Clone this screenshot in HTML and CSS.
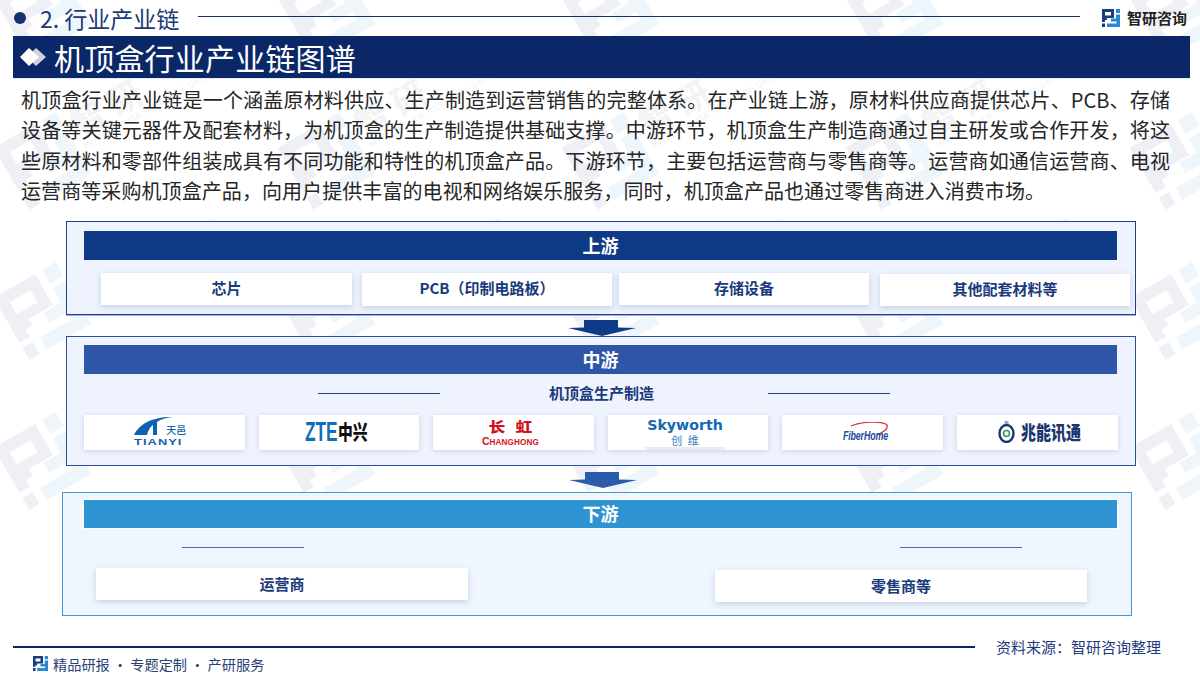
FILE: index.html
```html
<!DOCTYPE html>
<html lang="zh-CN">
<head>
<meta charset="utf-8">
<title>机顶盒行业产业链图谱</title>
<link rel="stylesheet" href="styles.css">
</head>
<body>
<svg class="defs" width="0" height="0" aria-hidden="true">
  <symbol id="mark" viewBox="0 0 18 18">
    <path fill="#1c3c80" d="M0 0H12V9H5V11H3V6.500H9V3H3V13H0ZM0 14.500H3V18H0Z"/>
    <path fill="#2a8ad0" d="M14 0H18V4H14ZM14 5.500H18V18H5V14.500H14.500V12.500H9V9.500H14Z"/>
  </symbol>
</svg>

<div class="watermarks" aria-hidden="true">
  <div class="wm"><svg class="wm-mark"><use href="#mark"/></svg><div class="wm-text"><b>智研</b><i>INTELLIGENCE RESEARCH GROUP</i></div></div>
  <div class="wm"><svg class="wm-mark"><use href="#mark"/></svg><div class="wm-text"><b>智研</b><i>INTELLIGENCE RESEARCH GROUP</i></div></div>
  <div class="wm"><svg class="wm-mark"><use href="#mark"/></svg><div class="wm-text"><b>智研</b><i>INTELLIGENCE RESEARCH GROUP</i></div></div>
  <div class="wm"><svg class="wm-mark"><use href="#mark"/></svg><div class="wm-text"><b>智研</b><i>INTELLIGENCE RESEARCH GROUP</i></div></div>
  <div class="wm"><svg class="wm-mark"><use href="#mark"/></svg><div class="wm-text"><b>智研</b><i>INTELLIGENCE RESEARCH GROUP</i></div></div>
  <div class="wm"><svg class="wm-mark"><use href="#mark"/></svg><div class="wm-text"><b>智研</b><i>INTELLIGENCE RESEARCH GROUP</i></div></div>
  <div class="wm"><svg class="wm-mark"><use href="#mark"/></svg><div class="wm-text"><b>智研</b><i>INTELLIGENCE RESEARCH GROUP</i></div></div>
  <div class="wm"><svg class="wm-mark"><use href="#mark"/></svg><div class="wm-text"><b>智研</b><i>INTELLIGENCE RESEARCH GROUP</i></div></div>
  <div class="wm"><svg class="wm-mark"><use href="#mark"/></svg><div class="wm-text"><b>智研</b><i>INTELLIGENCE RESEARCH GROUP</i></div></div>
  <div class="wm"><svg class="wm-mark"><use href="#mark"/></svg><div class="wm-text"><b>智研</b><i>INTELLIGENCE RESEARCH GROUP</i></div></div>
  <div class="wm"><svg class="wm-mark"><use href="#mark"/></svg><div class="wm-text"><b>智研</b><i>INTELLIGENCE RESEARCH GROUP</i></div></div>
  <div class="wm"><svg class="wm-mark"><use href="#mark"/></svg><div class="wm-text"><b>智研</b><i>INTELLIGENCE RESEARCH GROUP</i></div></div>
  <div class="wm"><svg class="wm-mark"><use href="#mark"/></svg><div class="wm-text"><b>智研</b><i>INTELLIGENCE RESEARCH GROUP</i></div></div>
  <div class="wm"><svg class="wm-mark"><use href="#mark"/></svg><div class="wm-text"><b>智研</b><i>INTELLIGENCE RESEARCH GROUP</i></div></div>
  <div class="wm"><svg class="wm-mark"><use href="#mark"/></svg><div class="wm-text"><b>智研</b><i>INTELLIGENCE RESEARCH GROUP</i></div></div>
  <div class="wm"><svg class="wm-mark"><use href="#mark"/></svg><div class="wm-text"><b>智研</b><i>INTELLIGENCE RESEARCH GROUP</i></div></div>
  <div class="wm"><svg class="wm-mark"><use href="#mark"/></svg><div class="wm-text"><b>智研</b><i>INTELLIGENCE RESEARCH GROUP</i></div></div>
  <div class="wm"><svg class="wm-mark"><use href="#mark"/></svg><div class="wm-text"><b>智研</b><i>INTELLIGENCE RESEARCH GROUP</i></div></div>
  <div class="wm"><svg class="wm-mark"><use href="#mark"/></svg><div class="wm-text"><b>智研</b><i>INTELLIGENCE RESEARCH GROUP</i></div></div>
  <div class="wm"><svg class="wm-mark"><use href="#mark"/></svg><div class="wm-text"><b>智研</b><i>INTELLIGENCE RESEARCH GROUP</i></div></div>
</div>

<main class="page">
  <header class="top">
    <span class="top-dot"></span>
    <span class="top-title">2. 行业产业链</span>
    <span class="top-line"></span>
    <svg class="brand-mark"><use href="#mark"/></svg>
    <span class="brand-name">智研咨询</span>
  </header>

  <h1 class="title">
    <svg class="title-icon" viewBox="0 0 28 20"><path fill="#cfd2d8" d="M17 1l10 9-10 9-9-9z"/><path fill="#fff" d="M10 1l10 9-10 9-9-9z"/></svg>
    <span>机顶盒行业产业链图谱</span>
  </h1>

  <div class="intro">
    <p class="jl">机顶盒行业产业链是一个涵盖原材料供应、生产制造到运营销售的完整体系。在产业链上游，原材料供应商提供芯片、PCB、存储</p>
    <p class="jl">设备等关键元器件及配套材料，为机顶盒的生产制造提供基础支撑。中游环节，机顶盒生产制造商通过自主研发或合作开发，将这</p>
    <p class="jl">些原材料和零部件组装成具有不同功能和特性的机顶盒产品。下游环节，主要包括运营商与零售商等。运营商如通信运营商、电视</p>
    <p class="last">运营商等采购机顶盒产品，向用户提供丰富的电视和网络娱乐服务，同时，机顶盒产品也通过零售商进入消费市场。</p>
  </div>

  <section class="panel panel-up">
    <div class="bar bar-up">上游</div>
    <div class="up-row">
      <div class="card up-1">芯片</div>
      <div class="card up-2">PCB（印制电路板）</div>
      <div class="card up-3">存储设备</div>
      <div class="card up-4">其他配套材料等</div>
    </div>
  </section>

  <svg class="arrow arrow-1" viewBox="0 0 68 16"><path fill="#0f3a85" d="M16 0H50V7.500L68 8 34 16 0 8 16 7.500Z"/></svg>

  <section class="panel panel-mid">
    <div class="bar bar-mid">中游</div>
    <div class="sub-row">
      <span class="rule"></span>
      <span class="sub-label">机顶盒生产制造</span>
      <span class="rule"></span>
    </div>
    <div class="logo-row">
      <div class="logo-card">
        <div class="lg-tianyi">
          <svg class="ty-arc" viewBox="0 0 38 18"><path fill="#0f62b0" d="M0 18C5 8 16 0 38 0 30 1 26 3 23 5V18H19V8C16 10 14 14 13 18Z"/></svg>
          <span class="ty-cn">天邑</span>
          <span class="ty-en">TIANYI</span>
        </div>
      </div>
      <div class="logo-card logo-zte">
        <span class="zte">ZTE</span><span class="zte-cn">中兴</span>
      </div>
      <div class="logo-card logo-col logo-ch">
        <span class="ch-cn"><span class="ch-g">长</span><span class="ch-g">虹</span></span>
        <span class="ch-en">CHANGHONG</span>
      </div>
      <div class="logo-card logo-col logo-sky">
        <span class="sky-en">Skyworth</span>
        <span class="sky-cn">创 维</span>
        <span class="sky-shade"></span>
      </div>
      <div class="logo-card">
        <div class="fh">
          <svg class="fh-arc" viewBox="0 0 46 14"><path fill="none" stroke="#d8333a" stroke-width="1.300" d="M8 4C20-1 40-1 44 3 45 6 41 10 34 13"/></svg>
          <span class="fh-text">FiberHome</span>
        </div>
      </div>
      <div class="logo-card logo-zn">
        <svg class="zn-icon" viewBox="0 0 16 22"><ellipse cx="8" cy="12.500" rx="7" ry="8.500" fill="none" stroke="#1a3770" stroke-width="2.400"/><circle cx="8" cy="12.500" r="3" fill="none" stroke="#2a9a5c" stroke-width="1.600"/><path fill="#9aa6bc" d="M6 0h4v3H6z"/></svg>
        <span class="zn-text">兆能讯通</span>
      </div>
    </div>
  </section>

  <svg class="arrow arrow-2" viewBox="0 0 68 16"><path fill="#2a5cab" d="M16 0H50V7.500L68 8 34 16 0 8 16 7.500Z"/></svg>

  <section class="panel panel-down">
    <div class="bar bar-down">下游</div>
    <div class="down-rules">
      <span class="rule rule-soft"></span>
      <span class="rule rule-soft"></span>
    </div>
    <div class="down-row">
      <div class="card down-1">运营商</div>
      <div class="card down-2">零售商等</div>
    </div>
  </section>

  <footer class="foot">
    <div class="foot-top">
      <span class="foot-line"></span>
      <span class="foot-source">资料来源：智研咨询整理</span>
    </div>
    <div class="foot-bottom">
      <svg class="foot-mark"><use href="#mark"/></svg>
      <span class="foot-slogan">精品研报 · 专题定制 · 产研服务</span>
    </div>
  </footer>
</main>
</body>
</html>
```

FILE: styles.css
```css
* { box-sizing: border-box; }
html, body { margin: 0; padding: 0; }
body {
  width: 1200px;
  height: 674px;
  overflow: hidden;
  background: #fff;
  position: relative;
  font-family: "Noto Sans CJK SC", "Noto Sans", sans-serif;
}
.defs { position: absolute; }

/* watermark layer */
.watermarks {
  position: absolute;
  left: 0;
  top: 0;
  width: 1200px;
  height: 674px;
  overflow: hidden;
  display: grid;
  grid-template-columns: repeat(5, 284px);
  grid-auto-rows: 150px;
  padding: 0 0 0 2px;
  margin: 0;
  align-content: start;
}
.wm { display: flex; align-items: flex-start; gap: 8px; transform: translateY(-38px) rotate(-30deg); transform-origin: 40px 40px; padding-top: 12px; width: 284px; }
.wm-mark { width: 72px; height: 72px; opacity: .07; flex: none; }
.wm-text { display: flex; flex-direction: column; color: #f2f3f5; margin-top: 2px; }
.wm-text b { font-size: 34px; line-height: 38px; font-weight: 700; letter-spacing: 8px; white-space: nowrap; }
.wm-text i { font: normal 8px/10px "Liberation Sans", sans-serif; white-space: nowrap; letter-spacing: .6px; color: #eef0f3; }

.page { position: relative; display: flex; flex-direction: column; height: 674px; }
.page > * { flex: none; }

/* header */
.top { display: flex; align-items: center; height: 36px; padding-left: 14px; }
.top-dot { width: 12px; height: 12px; border-radius: 50%; background: #14306f; flex: none; }
.top-title { margin-left: 14px; font-size: 23px; line-height: 36px; color: #1d3a78; width: 158px; flex: none; white-space: nowrap; }
.top-line { width: 882px; height: 1.500px; background: #14306f; margin-top: -3px; flex: none; }
.brand-mark { width: 18px; height: 18px; margin-left: 22px; flex: none; }
.brand-name { margin-left: 7px; font-size: 15px; font-weight: 700; color: #222; white-space: nowrap; line-height: 18px; }

.title {
  margin: 0 0 0 13px;
  width: 1177px;
  height: 42px;
  background: #0a2768;
  color: #fff;
  font-size: 30px;
  letter-spacing: .2px;
  font-weight: 400;
  line-height: 42px;
  display: flex;
  align-items: center;
  padding-left: 6px;
  box-shadow: 0 1px 0 #e6ebf4;
}
.title-icon { width: 28px; height: 20px; margin-right: 7px; flex: none; }

/* intro paragraph */
.intro { margin: 7px 0 0 21px; width: 1149px; font-size: 20px; color: #262626; }
.intro p { margin: 0; height: 30.400px; line-height: 30.400px; white-space: nowrap; }
.intro .jl { white-space: normal; text-align: justify; text-align-last: justify; }
.intro .last { letter-spacing: .08px; }

/* panels */
.panel { border: 1px solid #2a4f9e; background: #eef3fd; margin-left: 66px; width: 1070px; }
.panel-up { margin-top: 14.400px; height: 94px; padding: 9px 18px 0 17px; border-color: #1f418f; box-shadow: 0 1px 0 #9db0d8; }
.panel-mid { height: 130px; padding: 8px 18px 0 17px; }
.panel-down { margin-left: 62px; width: 1070px; height: 124px; padding: 7px 14px 0 21px; border-color: #3d98d6; background: #eff6fe; }

.bar { height: 29px; color: #fff; font-size: 18px; font-weight: 700; line-height: 29px; text-align: center; }
.bar-up { background: #0f3a85; }
.bar-mid { background: #2d57a6; }
.bar-down { height: 28px; line-height: 27px; background: #3093d1; box-shadow: 0 0 0 1px #fff; }

.card {
  background: #fff;
  color: #1a3a7c;
  font-size: 15px;
  font-weight: 700;
  text-align: center;
  flex: none;
  box-shadow: 0 2px 6px rgba(70, 100, 170, .25);
}

.up-row { display: flex; align-items: flex-start; margin-top: 13px; }
.up-row .card { height: 32px; line-height: 30px; }
.up-1 { margin-left: 17px; width: 251px; }
.up-2 { margin-left: 10px; width: 250px; }
.up-row .up-2 { height: 33px; }
.up-3 { margin-left: 7px; width: 250px; }
.up-4 { margin-left: 11px; width: 250px; margin-top: 1px; }

.arrow { display: block; width: 68px; height: 16px; }
.arrow-1 { margin: 5px 0 0 568px; }
.arrow-2 { margin: 6px 0 4px 569px; }

/* mid */
.sub-row { display: flex; align-items: center; justify-content: center; height: 32px; margin-top: 4px; padding-left: 6px; }
.rule { display: block; width: 122px; height: 1px; background: #1f418f; flex: none; margin-top: -1px; }
.sub-label { width: 328px; text-align: center; font-size: 15px; font-weight: 700; color: #1a3a7c; margin-left: -2px; line-height: 32px; margin-top: -1px; margin-right: 2px; }

.logo-row { display: flex; gap: 14px; margin-top: 5px; }
.logo-card {
  flex: none;
  width: 160.600px;
  height: 35px;
  background: #fff;
  box-shadow: 0 1px 5px rgba(70, 100, 170, .22);
  display: flex;
  align-items: center;
  justify-content: center;
  overflow: hidden;
}
.logo-col { flex-direction: column; }

.lg-tianyi { position: relative; width: 52px; height: 30px; margin-right: 8px; }
.ty-arc { position: absolute; left: 0; top: 0; width: 38px; height: 18px; }
.ty-cn { position: absolute; left: 32px; top: 7px; font-size: 10px; line-height: 12px; color: #0f62b0; font-weight: 500; white-space: nowrap; }
.ty-en { position: absolute; left: 0; top: 20px; font: 700 9.500px/10px "Liberation Sans", sans-serif; letter-spacing: .8px; color: #0f62b0; white-space: nowrap; transform: scaleX(1.35); transform-origin: left center; }

.logo-zte { padding-right: 4px; }
.zte { font: 700 27px/30px "Liberation Sans", sans-serif; color: #0f6dc0; transform: scaleX(.64); transform-origin: left center; margin-right: -18px; }
.zte-cn { font-size: 20px; font-weight: 900; color: #111; line-height: 30px; transform: scaleX(.74); transform-origin: left center; margin-right: -10px; }

.logo-ch { padding-right: 6px; }
.ch-cn { display: flex; gap: 13px; height: 20px; line-height: 20px; }
.ch-g { font-size: 14px; font-weight: 900; color: #d3141c; transform: scaleX(1.2); }
.ch-en { display: block; font: 700 8.200px/11px "Liberation Sans", sans-serif; color: #d3141c; letter-spacing: .1px; }
.ch-en::first-letter { font-size: 10.500px; }

.logo-sky { padding: 2px 6px 0 0; }
.sky-en { font: 700 13.500px/16px "DejaVu Sans", sans-serif; color: #1467b3; transform: scaleX(1.05); }
.sky-cn { font-size: 11px; line-height: 14px; color: #3a7fc0; word-spacing: 3px; }
.sky-shade { width: 80px; height: 3px; background: #ececec; flex: none; }

.fh { position: relative; display: flex; align-items: flex-end; height: 20px; margin-left: 6px; }
.fh-arc { position: absolute; left: 8px; top: 0; width: 46px; height: 14px; }
.fh-text { font: italic 700 12px/12px "Liberation Sans", sans-serif; color: #1c4b9a; transform: scaleX(.74); letter-spacing: -.2px; }

.logo-zn { padding-left: 4px; }
.zn-icon { width: 17px; height: 22px; margin-right: 6px; flex: none; }
.zn-text { font-size: 19px; font-weight: 900; color: #1a3770; line-height: 24px; transform: scaleX(.79); transform-origin: left center; margin-right: -16px; white-space: nowrap; }

/* down */
.down-rules { display: flex; gap: 596px; margin: 19px 0 0 98px; }
.rule-soft { background: #4f6ca8; height: 1.500px; margin-top: 0; }
.down-row { display: flex; align-items: flex-start; margin-top: 19.500px; }
.down-row .card { width: 372px; height: 32px; line-height: 32px; }
.down-1 { margin-left: 12px; }
.down-2 { margin-left: 247px; margin-top: 2px; }

/* footer */
.foot { margin-top: 20px; }
.foot-top { display: flex; align-items: center; height: 22px; padding-left: 13px; }
.foot-line { width: 962px; height: 1.500px; background: #0a2768; flex: none; }
.foot-source { margin-left: 21px; font-size: 15px; color: #1f3a7a; white-space: nowrap; line-height: 22px; }
.foot-bottom { display: flex; align-items: center; padding-left: 33px; height: 18px; margin-top: -3px; }
.foot-mark { width: 15px; height: 15px; flex: none; }
.foot-slogan { margin-left: 5px; font-size: 14.200px; color: #2a3f72; line-height: 18px; white-space: nowrap; }
```
